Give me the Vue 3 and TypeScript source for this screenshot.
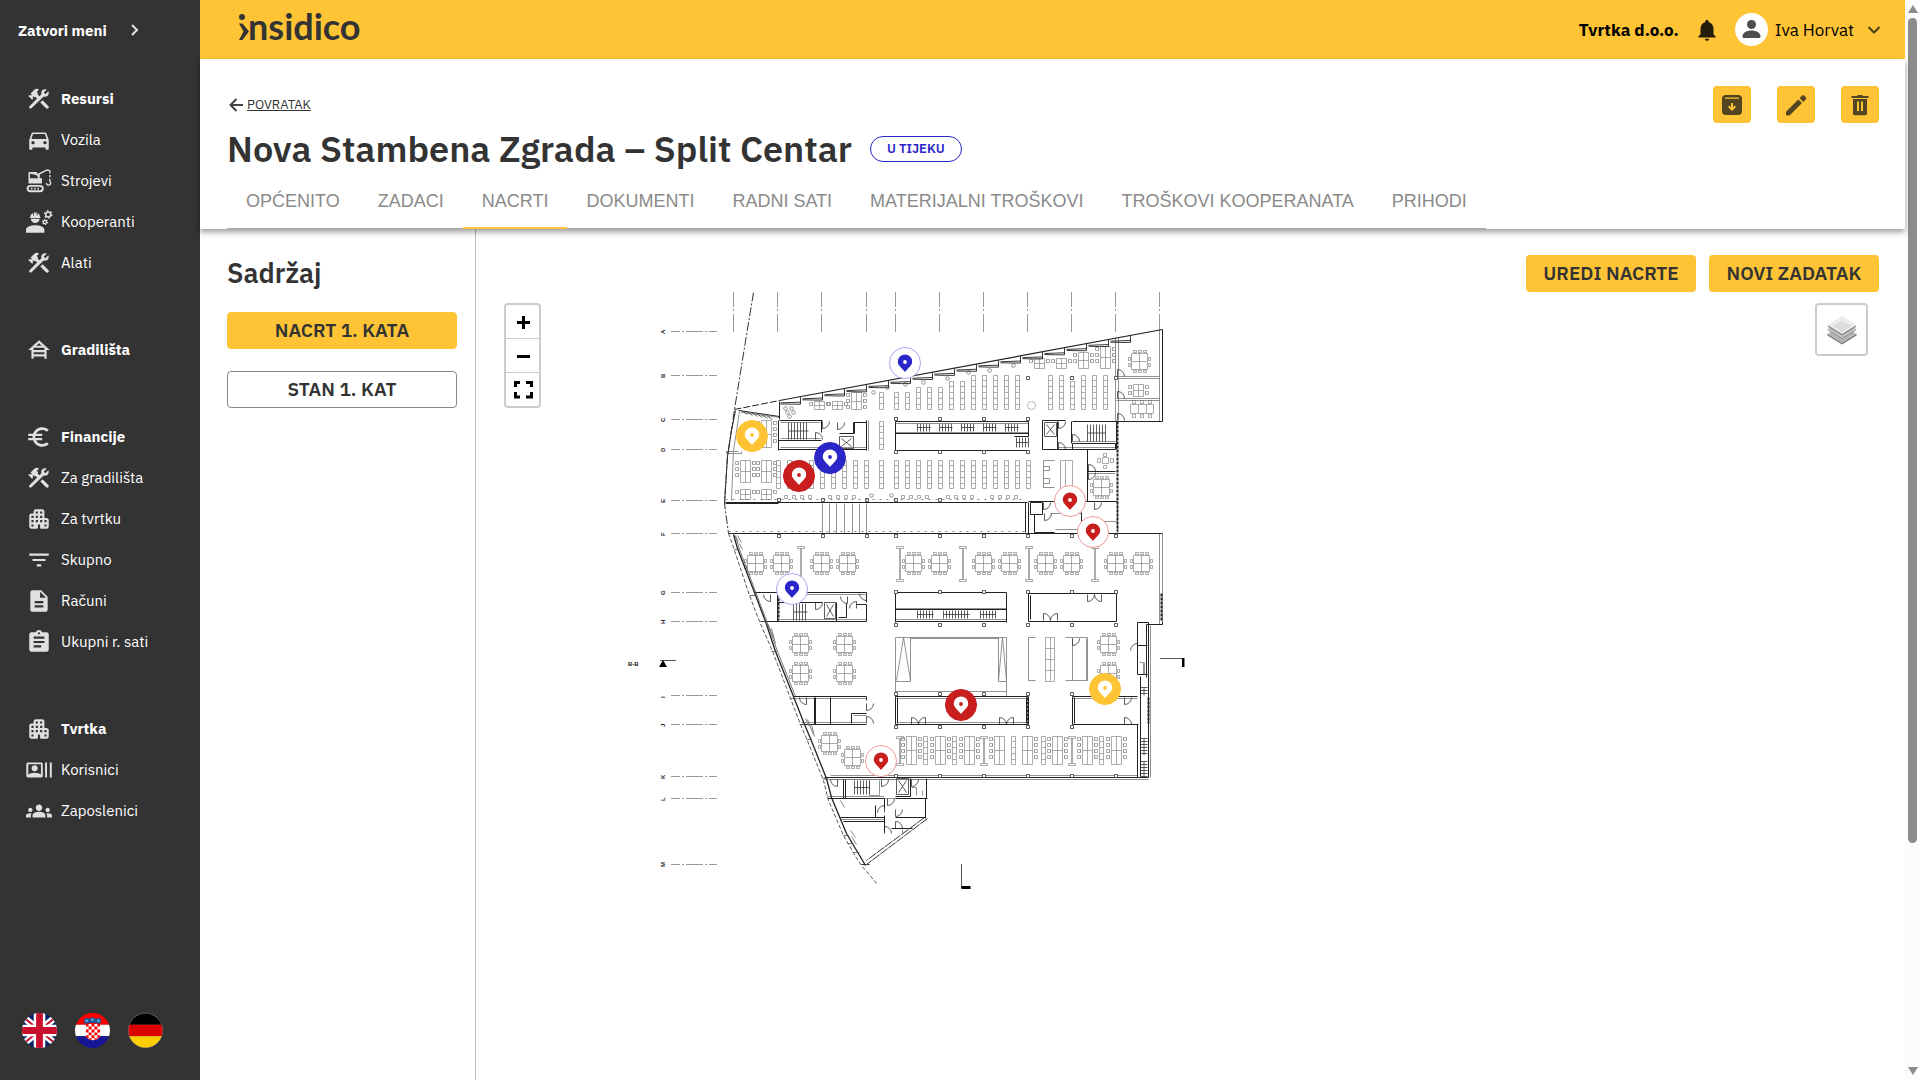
<script setup lang="ts">
import { ref } from 'vue'

interface NavItem {
  label: string
  icon: string
}

const icons: Record<string, string> = {
  tools:
    'M17.5 10c1.93 0 3.5-1.57 3.5-3.5 0-.58-.16-1.12-.41-1.6l-2.7 2.7-1.49-1.49 2.7-2.7C18.62 3.16 18.08 3 17.5 3 15.57 3 14 4.57 14 6.5c0 .41.08.8.21 1.16l-1.85 1.85-1.78-1.78.71-.71-1.41-1.41L12 3.49c-1.17-1.17-3.07-1.17-4.24 0L4.22 7.03l1.41 1.41H2.81l-.71.71 3.54 3.54.71-.71V9.15l1.41 1.41.71-.71 1.78 1.78-7 7c-.5.5-.5 1.3 0 1.8s1.3.5 1.8 0L16.34 9.79c.36.13.75.21 1.16.21zM13.2 15.3l2.1-2.1 5.3 5.3c.6.6.6 1.5 0 2.1s-1.5.6-2.1 0z',
  car: 'M18.92 6.01C18.72 5.42 18.16 5 17.5 5h-11c-.66 0-1.21.42-1.42 1.01L3 12v8c0 .55.45 1 1 1h1c.55 0 1-.45 1-1v-1h12v1c0 .55.45 1 1 1h1c.55 0 1-.45 1-1v-8l-2.08-5.99zM6.5 16c-.83 0-1.5-.67-1.5-1.5S5.67 13 6.5 13s1.5.67 1.5 1.5S7.33 16 6.5 16zm11 0c-.83 0-1.5-.67-1.5-1.5s.67-1.5 1.5-1.5 1.5.67 1.5 1.5-.67 1.5-1.5 1.5zM5 11l1.5-4.5h11L19 11H5z',
  house:
    'M19 12h3L12 3 2 12h3v8h2v-2h10v2h2v-8zM7.21 10h9.58l.21.19V12H7v-1.81l.21-.19zm7.36-2H9.43L12 5.69 14.57 8zM7 16v-2h10v2H7z',
  euro: 'M15 18.5c-2.51 0-4.68-1.42-5.76-3.5H15v-2H8.58c-.05-.33-.08-.66-.08-1s.03-.67.08-1H15V9H9.24C10.32 6.92 12.5 5.5 15 5.5c1.61 0 3.09.59 4.23 1.57L21 5.3C19.41 3.87 17.3 3 15 3c-3.92 0-7.24 2.51-8.48 6H2v2h4.06c-.04.33-.06.66-.06 1s.02.67.06 1H2v2h4.52c1.24 3.49 4.56 6 8.48 6 2.31 0 4.41-.87 6-2.3l-1.78-1.77c-1.13.98-2.6 1.57-4.22 1.57z',
  building:
    'M17 11V5c0-1.1-.9-2-2-2H9c-1.1 0-2 .9-2 2v2H5c-1.1 0-2 .9-2 2v10c0 1.1.9 2 2 2h5c.55 0 1-.45 1-1v-3h2v3c0 .55.45 1 1 1h5c1.1 0 2-.9 2-2v-6c0-1.1-.9-2-2-2h-2zM7 19H5v-2h2v2zm0-4H5v-2h2v2zm0-4H5V9h2v2zm4 4H9v-2h2v2zm0-4H9V9h2v2zm0-4H9V5h2v2zm4 8h-2v-2h2v2zm0-4h-2V9h2v2zm0-4h-2V5h2v2zm4 12h-2v-2h2v2zm0-4h-2v-2h2v2z',
  filter: 'M10 18h4v-2h-4v2zM3 6v2h18V6H3zm3 7h12v-2H6v2z',
  document:
    'M14 2H6c-1.1 0-1.99.9-1.99 2L4 20c0 1.1.89 2 1.99 2H18c1.1 0 2-.9 2-2V8l-6-6zm2 16H8v-2h8v2zm0-4H8v-2h8v2zm-3-5V3.5L18.5 9H13z',
  clipboard:
    'M19 3h-4.18C14.4 1.84 13.3 1 12 1c-1.3 0-2.4.84-2.82 2H5c-1.1 0-2 .9-2 2v14c0 1.1.9 2 2 2h14c1.1 0 2-.9 2-2V5c0-1.1-.9-2-2-2zm-7 0c.55 0 1 .45 1 1s-.45 1-1 1-1-.45-1-1 .45-1 1-1zm2 14H7v-2h7v2zm3-4H7v-2h10v2zm0-4H7V7h10v2z',
  users:
    'M17.6 5v14h1.8V5zm4.4 0v14h1.8V5zM14 5H2C1 5 .3 5.700.3 6.600v10.800C.3 18.300 1 19 2 19h12c.9 0 1.500-.7 1.500-1.600V6.600C15.500 5.700 14.900 5 14 5zM2.100 6.600h11.700v9.600c-1.300-1-3.800-1.700-5.900-1.700s-4.500.7-5.800 1.700zM8 7.600a2.800 2.800 0 1 0 0 5.600 2.800 2.800 0 0 0 0-5.600z',
  group:
    'M12 12.75c1.63 0 3.07.39 4.24.9 1.08.48 1.76 1.56 1.76 2.73V18H6v-1.61c0-1.18.68-2.26 1.76-2.73 1.17-.52 2.61-.91 4.24-.91zM4 13c1.1 0 2-.9 2-2s-.9-2-2-2-2 .9-2 2 .9 2 2 2zm1.13 1.1c-.37-.06-.74-.1-1.13-.1-.99 0-1.93.21-2.78.58C.48 14.9 0 15.62 0 16.43V18h4.5v-1.61c0-.83.23-1.61.63-2.29zM20 13c1.1 0 2-.9 2-2s-.9-2-2-2-2 .9-2 2 .9 2 2 2zm4 3.43c0-.81-.48-1.53-1.22-1.85-.85-.37-1.79-.58-2.78-.58-.39 0-.76.04-1.13.1.4.68.63 1.46.63 2.29V18H24v-1.57zM12 6c1.66 0 3 1.34 3 3s-1.34 3-3 3-3-1.34-3-3 1.34-3 3-3z',
}

const nav: { head: NavItem; items: NavItem[] }[] = [
  {
    head: { label: 'Resursi', icon: 'tools' },
    items: [
      { label: 'Vozila', icon: 'car' },
      { label: 'Strojevi', icon: 'crane' },
      { label: 'Kooperanti', icon: 'worker' },
      { label: 'Alati', icon: 'tools' },
    ],
  },
  { head: { label: 'Gradilišta', icon: 'house' }, items: [] },
  {
    head: { label: 'Financije', icon: 'euro' },
    items: [
      { label: 'Za gradilišta', icon: 'tools' },
      { label: 'Za tvrtku', icon: 'building' },
      { label: 'Skupno', icon: 'filter' },
      { label: 'Računi', icon: 'document' },
      { label: 'Ukupni r. sati', icon: 'clipboard' },
    ],
  },
  {
    head: { label: 'Tvrtka', icon: 'building' },
    items: [
      { label: 'Korisnici', icon: 'users' },
      { label: 'Zaposlenici', icon: 'group' },
    ],
  },
]

const tabs = [
  'OPĆENITO',
  'ZADACI',
  'NACRTI',
  'DOKUMENTI',
  'RADNI SATI',
  'MATERIJALNI TROŠKOVI',
  'TROŠKOVI KOOPERANATA',
  'PRIHODI',
]
const activeTab = ref('NACRTI')

const plans = ['NACRT 1. KATA', 'STAN 1. KAT']
const activePlan = ref('NACRT 1. KATA')

type Tone = 'blue' | 'red' | 'amber'
interface Pin {
  x: number
  y: number
  tone: Tone
  solid: boolean
}
const pins: Pin[] = [
  { x: 411, y: 71, tone: 'blue', solid: false },
  { x: 258, y: 144, tone: 'amber', solid: true },
  { x: 336, y: 166, tone: 'blue', solid: true },
  { x: 305, y: 184, tone: 'red', solid: true },
  { x: 576, y: 209, tone: 'red', solid: false },
  { x: 599, y: 240, tone: 'red', solid: false },
  { x: 298, y: 297, tone: 'blue', solid: false },
  { x: 611, y: 397, tone: 'amber', solid: true },
  { x: 467, y: 413, tone: 'red', solid: true },
  { x: 387, y: 469, tone: 'red', solid: false },
]

/* ---- floor plan geometry ---- */
const range = (from: number, to: number, step: number): number[] => {
  const out: number[] = []
  for (let v = from; v <= to; v += step) out.push(v)
  return out
}
const box = (x: number, y: number, w: number, h: number): string => `M${x} ${y}h${w}v${h}h${-w}z`

const axes = [733, 777, 821, 866, 895, 939, 983, 1027, 1071, 1115, 1159]
const rows: [string, number][] = [
  ['A', 331], ['B', 375], ['C', 419], ['D', 449], ['E', 500], ['F', 533], ['G', 592],
  ['H', 621], ['I', 695], ['J', 724], ['K', 776], ['L', 798], ['M', 864],
]

/* saw-tooth facade below the slanted roof edge */
const slant = (x: number): number => 409 - (x - 734) * 0.187
const teeth = range(800, 1150, 22)
  .map((x) => `M${x} ${slant(x)}v7h-9L${x - 20} ${slant(x - 20) + 3}M${x - 20} ${slant(x - 20) + 2}L${x} ${slant(x) + 5}`)
  .join('')

const shelf = (x: number, top: number, bottom: number): string => {
  let d = box(x - 2, top, 4, bottom - top)
  for (let y = top + 5; y < bottom - 2; y += 6) d += `M${x - 2} ${y}h4`
  return d
}
const shelves = [
  ...[881, 896, 907].map((x) => shelf(x, 392, 409)),
  ...[918, 929, 940].map((x) => shelf(x, 387, 409)),
  ...[951, 962].map((x) => shelf(x, 381, 409)),
  ...[973, 984, 995, 1006, 1017, 1050, 1061, 1083, 1094, 1105].map((x) => shelf(x, 375, 409)),
  shelf(1072, 381, 409),
  shelf(881, 421, 449),
  shelf(881, 460, 488),
  ...range(778, 866, 11).map((x) => shelf(x, 460, 488)),
  ...range(896, 1028, 11).map((x) => shelf(x, 460, 488)),
  ...[925, 954, 1013, 1043, 1101].map((x) => shelf(x, 736, 764)),
  box(1060, 460, 12, 28) + 'M1065 461v27',
  box(1045, 637, 9, 44) + 'M1050 637v44M1045 648h9M1045 659h9M1045 670h9',
].join('')

/* desk for ten: square top with chairs all round */
const table = (x: number, y: number): string =>
  box(x - 8, y - 8, 16, 16) +
  `M${x} ${y - 8}v16M${x - 8} ${y}h16` +
  [-5, 0, 5].map((o) => box(x + o - 1, y - 11, 3, 2) + box(x + o - 1, y + 9, 3, 2)).join('') +
  [-4, 2].map((o) => box(x - 11, y + o, 2, 3) + box(x + 9, y + o, 2, 3)).join('')
const tables = [
  ...[755, 781, 821, 847, 913, 939, 983, 1009, 1045, 1071, 1115, 1141].map((x) => table(x, 563)),
  table(800, 644), table(844, 644), table(800, 673), table(844, 673),
  table(1108, 644), table(1108, 673), table(829, 743), table(852, 757),
  table(1139, 361), table(1101, 487),
].join('')

/* long desk with chairs on the chosen sides */
const desk = (x: number, y: number, h: number, left = true, right = true): string => {
  let d = box(x - 5, y, 10, h) + `M${x} ${y}v${h}M${x - 5} ${y + Math.round(h / 2)}h10`
  for (let o = 1; o < h - 3; o += 6) {
    if (left) d += box(x - 10, y + o, 3, 3) + `M${x - 7} ${y + o}v3`
    if (right) d += box(x + 7, y + o, 3, 3) + `M${x + 7} ${y + o}v3`
  }
  return d
}
const desks = [
  desk(911, 736, 28), desk(940, 736, 28), desk(969, 736, 28), desk(999, 736, 28, true, false),
  desk(1027, 736, 28, false, true), desk(1057, 736, 28), desk(1087, 736, 28), desk(1116, 736, 28),
  desk(745, 460, 22), desk(766, 460, 22), desk(745, 489, 10), desk(766, 489, 10),
  desk(766, 420, 27), desk(819, 401, 8), desk(837, 401, 8), desk(856, 392, 17),
  desk(1039, 358, 10), desk(1061, 358, 10), desk(1083, 352, 16), desk(1105, 346, 22),
  desk(1138, 384, 12), box(1130, 404, 23, 9) + 'M1138 404v9M1146 404v9',
  ...[1132, 1140, 1148].map((x) => box(x, 400, 3, 3) + box(x, 414, 3, 3)),
  box(1102, 457, 6, 6), box(1097, 458, 3, 4), box(1110, 458, 3, 4), box(1103, 453, 3, 3), box(1103, 465, 3, 3),
].join('')

const stools = [785, 829, 902, 947, 991]
  .flatMap((x) => range(x, x + 30, 8))
  .map((x) => box(x - 1, 495, 3, 3))
  .join('')
const rounds = [
  [873, 392], [887, 387], [905, 384], [923, 382], [947, 378], [968, 372], [989, 370], [1013, 365],
  [871, 495], [891, 495], [785, 408], [791, 408], [787, 412], [793, 412], [789, 416],
]

/* structural columns on the grid */
const cols = [
  ...[895, 939, 983, 1027].flatMap((x) => [[x, 418], [x, 451]]),
  ...[1027, 1071, 1115].map((x) => [x, 377]),
  ...[778, 822, 866, 895, 939].map((x) => [x, 499]),
  ...[778, 822, 866, 895, 939, 983, 1027, 1071, 1115].map((x) => [x, 535]),
  ...[895, 939, 983, 1027, 1071, 1115].flatMap((x) => [[x, 591], [x, 624]]),
  ...[895, 939, 983, 1027, 1071].flatMap((x) => [[x, 693], [x, 726], [x, 775]]),
  [1115, 775],
]
  .map(([x, y]) => box(x - 1, y - 1, 3, 3))
  .join('')

const stair = (x: number, y: number, w: number, h: number): string => {
  let d = `M${x} ${y + h / 2}h${w}`
  for (let o = 0; o <= w; o += 3) d += `M${x + o} ${y}v${h}`
  return d
}
const ladder = (x: number, y: number, w: number, h: number): string => {
  let d = `M${x + w / 2} ${y}v${h}`
  for (let o = 0; o <= h; o += 3) d += `M${x} ${y + o}h${w}`
  return d
}
const stairs = [
  stair(788, 422, 20, 17),
  ...[917, 939, 961, 983, 1005].map((x) => stair(x, 423, 13, 8)),
  stair(1016, 437, 12, 10), stair(1087, 424, 18, 17), stair(793, 603, 14, 17),
  stair(917, 610, 16, 8), stair(943, 610, 26, 8), stair(980, 610, 15, 8), stair(854, 780, 15, 14),
  ladder(1140, 687, 7, 8), ladder(1140, 738, 7, 17), ladder(1140, 761, 7, 16),
].join('')

const lift = (x: number, y: number, w: number, h: number): string =>
  box(x, y, w, h) + `M${x + 2} ${y + 2}l${w - 4} ${h - 4}M${x + w - 2} ${y + 2}l${4 - w} ${h - 4}`
const lifts = lift(839, 436, 14, 12) + lift(1044, 422, 12, 14) + lift(824, 602, 11, 16) + lift(896, 778, 12, 16)

const screens = [
  ...[800, 899, 962, 1028, 1094].map((x) => [x, 546, 35]),
  ...[899, 983, 1071].map((x) => [x, 736, 29]),
]
  .map(([x, y, h]) => `${box(x - 3, y, 7, 2)}M${x} ${y + 2}v${h - 4}M${x + 1} ${y + 2}v${h - 4}${box(x - 3, y + h - 2, 7, 2)}`)
  .join('')

const door = (x: number, y: number, sx: number, sy: number): string =>
  `M${x} ${y}v${7 * sy}a7 7 0 0 ${sx * sy > 0 ? 0 : 1} ${7 * sx} ${-7 * sy}`
const doors = [
  door(822, 421, 1, 1), door(837, 422, 1, 1), door(815, 439, 1, -1), door(1058, 421, 1, 1), door(1058, 449, 1, -1),
  door(1072, 441, 1, -1), door(1117, 376, 1, -1), door(1117, 398, 1, -1), door(1117, 420, 1, -1),
  door(1088, 471, 1, -1), door(1088, 472, 1, 1), door(1043, 502, 1, 1), door(1094, 502, 1, 1), door(1044, 513, 1, 1),
  door(1087, 594, 1, 1), door(1101, 594, -1, 1), door(1043, 620, 1, -1), door(1057, 620, -1, -1),
  door(911, 724, 1, -1), door(925, 724, -1, -1), door(999, 724, 1, -1), door(1013, 724, -1, -1),
  door(1124, 697, 1, 1), door(1124, 724, 1, -1), door(866, 703, 1, 1), door(866, 723, 1, -1),
  door(770, 594, -1, 1), door(806, 697, -1, 1), door(847, 596, -1, 1), door(866, 593, -1, 1),
  door(815, 602, 1, 1), door(856, 608, -1, -1), door(837, 779, -1, 1), door(881, 779, 1, 1), door(911, 779, 1, 1),
  door(887, 798, 1, 1), door(895, 809, 1, 1), door(884, 812, -1, -1), door(895, 828, 1, -1), door(884, 833, 1, -1),
  door(1137, 650, -1, -1), door(1072, 638, 1, 1), door(785, 596, -1, -1),
].join('')

const heavy = [
  'M735 410L731 430L727 456L724 503M725 503H778M725 502H1027M728 533H1162M779 401v18M738 410l41 6',
  'M779 420h43M778 420v30M778 449h88M866 420v30M821 420v12M778 440h43M854 422v11h-15M853 433v-11h13',
  'M895 421h133M895 433h133M895 421v29M895 450h133M1028 421v15h-14',
  'M1042 420v29h15M1057 421v28M1071 421v22M1042 420h23M1072 421h45M1072 443h43v6M1072 443v6',
  'M1116 420v29M1116 421h46M1162 329v92M1087 449v52M1087 471h28M1057 449h58',
  'M1025 502v30M1028 502v31M1028 501h89M1030 502h12v12h-12zM1034 514v18h20M1081 512v20M1028 533h89',
  'M754 592h112M777 593v28M760 621h106M866 592v10M778 602h44M836 602v19M846 603v14h-8M856 604h10M866 604v17',
  'M895 592h111M895 592v30M1006 592v30M895 609h111M895 621h111',
  'M1028 593h88v28h-88zM1030 595v24',
  'M793 696h73v4M800 724h66M814 697v27M815 697v27M830 697v27M866 713h-15v10',
  'M895 696h133v28h-133zM897 697v26M1026 697v26M1072 696h65M1072 696v28M1074 697v26M1072 724h66M1137 724v53',
  'M824 777h103M927 777H1148M1148 622v155M1137 622v52M1146 624v53M1137 622h11M1146 624h16v-3M1137 645h10M1137 674h10M1140 676v100',
  'M843 779v19M845 779v19M827 798h57M884 798v10M884 815v17M875 805v12M840 817h44M843 821h41M895 798h32M926 778v20M925 798v20M895 817h30M891 828h21M910 778v18M895 796h15',
].join('')
const fine = [
  'M739 411L733 450L731 500M741 412l38 5M738 451h-12v2h15v-2M780 422h40M780 447h86M868 420v30M780 438h40',
  'M895 423h133M895 432h133M1115 337v83M1118 337v83M1159 331v90M1116 376h43M1116 378h43M1116 398h43M1116 400h43M1057 447h58M1072 441h43',
  'M1043 460h11M1043 460v27h11M1043 466h6v4h-6M1043 478h6v5h-6M1088 473h27M1159 533v91M1162 533v91',
  'M1050 513h31M1082 521h34M1055 529h26M1117 502v31M895 608h111M895 619h111M779 594h86M780 619h86',
  'M895 637h111M910 638h88M895 637v59M1006 637v59M910 637v44h-15M896 680l7-43 7 43M998 637v44h8M998 680l4-43 4 43M895 691h111',
  'M1035 637h-7v43h7M1028 637M1065 637h22v43h-22M1072 638v42M1086 638v42',
  'M896 698h131M896 722h131M1072 698h65M793 698h73M801 722h65M853 715h13M830 775h307M830 779h318',
  'M829 533v-30M836 533v-30M844 533v-30M852 533v-30M859 533v-30M822 533v-30M866 533v-30M1150 625v152M1144 662v12M1139 662h4v12',
  'M824 779h103M827 796h57M840 819h44M869 780v15h10v-15M883 798h12M911 787h5v8M922 795v-5M902 829v4',
].join('')
</script>

<template>
  <div class="app">
    <aside class="sidebar">
      <button class="collapse" type="button">
        Zatvori meni
        <svg width="12" height="16" viewBox="0 0 12 16"><path d="M3 3l5 5-5 5" fill="none" stroke="#e4e4e4" stroke-width="2" /></svg>
      </button>
      <nav class="nav">
        <ul v-for="group in nav" :key="group.head.label" class="group">
          <li v-for="(item, i) in [group.head, ...group.items]" :key="item.label">
            <a href="#" class="nav-link" :class="{ strong: i === 0 }">
              <svg v-if="item.icon === 'crane'" class="nav-icon" viewBox="0 0 24 24" fill="none" stroke="#e0e0e0">
                <path d="M3 10.500V4.500h6.500l2.500 4.500V5.500L19 2h2.500M12 6.500L3.800 4.500M14 9.500v4H3v-3" stroke-width="1.400" />
                <path d="M3 9.500h11v4H3z" fill="#e0e0e0" stroke="none" />
                <path d="M22 2v3M22 6.500v2M22 10v2.200a2 2 0 1 1-3.200 1.800" stroke-width="1.300" />
                <rect x="1.500" y="16.500" width="14" height="5" rx="2.500" stroke-width="1.800" />
                <path d="M4.500 19h9" stroke-width="1.500" stroke-dasharray="1.500 1.500" />
              </svg>
              <svg v-else-if="item.icon === 'worker'" class="nav-icon" viewBox="0 0 24 24" fill="#e0e0e0">
                <path d="M0 22v-3c0-2.700 5-4 8.500-4s8.500 1.300 8.500 4v3zM4.500 9h8a4 4 0 0 1-8 0zM3.500 8.300V7.500H4C4 5.600 5 4.200 6.500 3.600V6h.8V3.200h2.500V6h.8V3.600C12 4.200 13 5.600 13 7.500h.5v.8z" />
                <circle cx="20.500" cy="5" r="2.300" fill="none" stroke="#e0e0e0" stroke-width="1.400" />
                <circle cx="20.500" cy="5" r="3.400" fill="none" stroke="#e0e0e0" stroke-width="1.200" stroke-dasharray="1.600 1.960" />
                <circle cx="17.500" cy="12" r="1.500" fill="none" stroke="#e0e0e0" stroke-width="1.200" />
                <circle cx="17.500" cy="12" r="2.300" fill="none" stroke="#e0e0e0" stroke-width="1" stroke-dasharray="1.200 1.210" />
              </svg>
              <svg v-else class="nav-icon" viewBox="0 0 24 24" fill="#e0e0e0">
                <path :d="icons[item.icon]" :fill-rule="item.icon === 'users' ? 'evenodd' : 'nonzero'" />
              </svg>
              {{ item.label }}
            </a>
          </li>
        </ul>
      </nav>
      <div class="flags">
        <button type="button" aria-label="English">
          <svg viewBox="0 0 36 36">
            <clipPath id="uk"><circle cx="18" cy="18" r="18" /></clipPath>
            <g clip-path="url(#uk)">
              <path fill="#012169" d="M0 0h36v36H0z" />
              <path d="M0 3l36 30M36 3L0 33" stroke="#fff" stroke-width="7" />
              <path d="M0 3l36 30M36 3L0 33" stroke="#c8102e" stroke-width="2" />
              <path d="M18 0v36M0 18h36" stroke="#fff" stroke-width="12" />
              <path d="M18 0v36M0 18h36" stroke="#c8102e" stroke-width="7" />
            </g>
          </svg>
        </button>
        <button type="button" aria-label="Hrvatski">
          <svg viewBox="0 0 36 36">
            <clipPath id="hr"><circle cx="18" cy="18" r="18" /></clipPath>
            <clipPath id="shield"><path d="M11 11h15v11a7.500 6 0 0 1-15 0z" /></clipPath>
            <g clip-path="url(#hr)">
              <path fill="#f00" d="M0 0h36v12H0z" />
              <path fill="#fff" d="M0 12h36v12H0z" />
              <path fill="#171796" d="M0 24h36v12H0z" />
              <g clip-path="url(#shield)">
                <path fill="#fff" d="M11 11h15v18H11z" />
                <path d="M11 12.500h15M11 18.500h15M11 24.500h15" stroke="#f00" stroke-width="3" stroke-dasharray="3 3" />
                <path d="M14 15.500h15M14 21.500h15M14 27.500h15" stroke="#f00" stroke-width="3" stroke-dasharray="3 3" />
              </g>
              <path d="M10 11L9 7l3-2 3 1 3-2 3 2 4-1 2 2-1 4-8-1z" fill="#1b5a9a" />
              <path d="M11 8h2M17 7h2M23 8h2" stroke="#7fc0f0" stroke-width="2" />
            </g>
          </svg>
        </button>
        <button type="button" aria-label="Deutsch">
          <svg viewBox="0 0 36 36">
            <clipPath id="de"><circle cx="18" cy="18" r="17.500" /></clipPath>
            <circle cx="18" cy="18" r="18" fill="#777" />
            <g clip-path="url(#de)">
              <path d="M0 0h36v12H0z" />
              <path fill="#d00" d="M0 12h36v12H0z" />
              <path fill="#ffce00" d="M0 24h36v12H0z" />
            </g>
          </svg>
        </button>
      </div>
    </aside>

    <div class="page">
      <header class="topbar">
        <a href="#" class="logo" aria-label="insidico">
          <svg width="140" height="56" viewBox="0 0 140 56">
            <circle cx="4" cy="15" r="3" fill="#333" />
            <path d="M1 21.500h3.500l6.500 8-6.500 8.500H1L5.500 29.500z" fill="#333" />
            <text x="10" y="38" class="logo-text">nsidico</text>
          </svg>
        </a>
        <div class="account">
          <span class="company">Tvrtka d.o.o.</span>
          <button type="button" class="bell" aria-label="Obavijesti">
            <svg width="26" height="26" viewBox="0 0 24 24"><path fill="#241c08" d="M12 22c1.100 0 2-.9 2-2h-4c0 1.100.89 2 2 2zm6-6v-5c0-3.070-1.640-5.640-4.500-6.320V4c0-.83-.67-1.500-1.500-1.500s-1.500.67-1.500 1.500v.68C7.630 5.360 6 7.920 6 11v5l-2 2v1h16v-1l-2-2z" /></svg>
          </button>
          <button type="button" class="user">
            <svg width="33" height="33" viewBox="0 0 33 33">
              <circle cx="16.500" cy="16.500" r="16.500" fill="#fff" />
              <circle cx="16.500" cy="11.500" r="4.500" fill="#4d4d4d" />
              <path d="M7.500 23.500c0-4 4.500-6 9-6s9 2 9 6c0 1-.7 1.500-1.500 1.500H9c-.8 0-1.500-.5-1.500-1.500z" fill="#4d4d4d" />
            </svg>
            <span>Iva Horvat</span>
            <svg class="caret" width="14" height="14" viewBox="0 0 14 14"><path d="M1.500 4L7 9.500 12.500 4" fill="none" stroke="#4a3c17" stroke-width="2" /></svg>
          </button>
        </div>
      </header>

      <section class="project">
        <div class="project-top">
          <a href="#" class="back">
            <svg width="18" height="16" viewBox="0 0 18 16"><path d="M16 8H4M9.500 2L3.500 8l6 6" fill="none" stroke="#444" stroke-width="2" /></svg>
            <span>POVRATAK</span>
          </a>
          <div class="actions">
            <button type="button" aria-label="Arhiviraj">
              <svg viewBox="0 0 24 24"><path fill-rule="evenodd" d="M5.500 2h13C20.500 2 22 3.500 22 5.500v13c0 2-1.500 3.500-3.500 3.500h-13C3.500 22 2 20.500 2 18.500v-13C2 3.500 3.500 2 5.500 2zM5 4.500v1.200h14V4.500zM11 10v4.200l-1.600-1.600L8 14l4 4 4-4-1.400-1.400-1.600 1.600V10z" /></svg>
            </button>
            <button type="button" aria-label="Uredi">
              <svg viewBox="0 0 24 24"><path d="M2 19.500c0-.5.100-.9.500-1.300L14.300 6.400l3.700 3.700L6.100 21.900c-.3.300-.7.500-1.200.5H3c-.6 0-1-.4-1-1zM15.600 5.100l2.300-2.400c.8-.8 1.700-.8 2.400 0l1.400 1.400c.8.800.8 1.700 0 2.400l-2.400 2.400z" /></svg>
            </button>
            <button type="button" aria-label="Izbriši">
              <svg viewBox="0 0 24 24"><path fill-rule="evenodd" d="M4 3h5l1-1h4l1 1h5.500v2H3.500V3zM5 6h14v14.500c0 1-.7 1.700-1.700 1.700H6.700c-1 0-1.700-.7-1.700-1.700zM9 8.500V18h2V8.500zm4 0V18h2V8.500z" /></svg>
            </button>
          </div>
        </div>
        <div class="title-row">
          <h1>Nova Stambena Zgrada – Split Centar</h1>
          <span class="status">U TIJEKU</span>
        </div>
        <div class="tabs" role="tablist">
          <button
            v-for="tab in tabs"
            :key="tab"
            type="button"
            role="tab"
            :aria-selected="tab === activeTab"
            :class="{ active: tab === activeTab }"
            @click="activeTab = tab"
          >
            {{ tab }}
          </button>
        </div>
      </section>

      <main class="body">
        <section class="contents">
          <h2>Sadržaj</h2>
          <button
            v-for="plan in plans"
            :key="plan"
            type="button"
            class="plan-button"
            :class="{ active: plan === activePlan }"
            @click="activePlan = plan"
          >
            {{ plan }}
          </button>
        </section>

        <section class="viewer">
          <div class="viewer-actions">
            <button type="button">UREDI NACRTE</button>
            <button type="button">NOVI ZADATAK</button>
          </div>
          <div class="map">
            <svg class="plan" width="720" height="600" viewBox="494 292 720 600" fill="none" stroke="#222" stroke-width="1">
              <g stroke="#999" stroke-dasharray="15 2 2 3 18">
                <path v-for="x in axes" :key="x" :d="`M${x + 0.5} 292v40`" />
              </g>
              <g stroke="#999" stroke-dasharray="9 2 2 2 17 2 2 2">
                <path v-for="row in rows" :key="row[0]" :d="`M671 ${row[1] + 0.5}h46`" />
              </g>
              <g class="axis-label" fill="#222" stroke="none">
                <text v-for="row in rows" :key="row[0]" :transform="`translate(665 ${row[1] + 3}) rotate(-90)`">{{ row[0] }}</text>
                <text x="628" y="666">B-B</text>
              </g>
              <path d="M660 660.500h16M1160 658.500h24M961.500 864v24" stroke="#555" />
              <path d="M659 667l4-7 4 7zM1182 658h2.500v9H1182zM961.500 886h9v3h-9z" fill="#000" stroke="none" />
              <g transform="translate(.5 .5)">
                <path :d="shelves" stroke="#aaa" />
                <path :d="tables + desks + stools" stroke="#888" stroke-width=".7" />
                <circle v-for="(r, i) in rounds" :key="i" :cx="r[0]" :cy="r[1]" r="1.800" stroke="#777" stroke-width=".8" />
                <circle cx="1031" cy="405" r="4" stroke="#999" stroke-width=".7" />
                <path :d="screens" stroke="#888" stroke-width=".7" />
                <path :d="fine" stroke="#777" stroke-width=".8" />
                <path :d="stairs" stroke="#333" stroke-width=".8" />
                <path :d="lifts" stroke="#333" stroke-width=".8" />
                <path :d="doors" stroke="#333" stroke-width=".8" />
                <path :d="heavy" />
                <path :d="cols" fill="#fff" stroke="#333" stroke-width=".8" />
                <path d="M734 409L779 400" stroke-dasharray="7 2" />
                <path d="M779 400L1162 329" stroke-width="1.200" />
                <path :d="teeth" stroke-width=".9" />
                <path d="M741 410l6 4m-1-3l6 4m-1-3l6 4m-1-3l6 4m-1-3l6 4m-1-3l6 4" stroke="#444" stroke-width=".8" />
                <path d="M753 292L744 347 734 409 727 455 724 503 728 533" stroke="#333" stroke-dasharray="9 2 2 2" />
                <path d="M728 533l6 17 15 45 10 26 14 32 17 45 10 26 6 14 17 42 5 20 15 35 12 21 6 9 16 19" stroke="#444" stroke-width=".9" stroke-dasharray="4 2" />
                <path d="M733 534l4 14 17 44 11 29 10 30 18 45 11 28 6 14 16 40 5 19 15 36 19 32" stroke-width="1.300" />
                <path d="M735 535l4 14 16 42 12 32 10 28 18 45M734 549h5M749 595h6M760 621h5M771 651h6M790 698h5M799 724h5M806 739h5M822 778h5M843 835h5M847 843h5M853 852h6" stroke="#555" stroke-width=".8" />
                <path d="M734 535l4 6m-1-6l4 7m-2 1l3 6m23 73l5 7m-3-6l6 14m-2-9l4 15m30 75l4 8m-2-7l6 15m-2-10l3 12m26 64l4 7m6 23l5 7m-4-1l5 8" stroke="#666" stroke-width=".8" />
                <path d="M927 818L866 864M924 817L866 860M861 864h8" stroke="#333" stroke-dasharray="9 1" />
                <path d="M1117 421v110M1161 593v28M1148 697v26M778 594v26M1027 697v26" stroke-width="2" stroke-dasharray="3 1" />
                <path d="M728 531h298M725 499h300" stroke="#666" stroke-width=".8" stroke-dasharray="2 5" />
              </g>
            </svg>

            <button
              v-for="(pin, i) in pins"
              :key="i"
              type="button"
              class="pin"
              :class="[pin.tone, { solid: pin.solid }]"
              :style="{ left: pin.x + 'px', top: pin.y + 'px' }"
              :aria-label="`Zadatak ${i + 1}`"
            >
              <svg width="20" height="20" viewBox="-10 -10 20 20">
                <path class="drop" d="M0 9C-2.500 5.500-7.200 2.500-7.200-1.300a7.200 7.200 0 0 1 14.400 0C7.200 2.500 2.500 5.500 0 9Z" />
                <circle class="dot" cx="0" cy="-1" r="1.900" />
              </svg>
            </button>

            <div class="zoom">
              <button type="button" aria-label="Povećaj"><svg width="33" height="33" viewBox="0 0 33 33"><path d="M11 17.500h13M17.500 11v13" stroke="#000" stroke-width="3" /></svg></button>
              <button type="button" aria-label="Smanji"><svg width="33" height="33" viewBox="0 0 33 33"><path d="M11 17.500h13" stroke="#000" stroke-width="3" /></svg></button>
              <button type="button" aria-label="Cijeli zaslon"><svg width="33" height="33" viewBox="0 0 33 33"><path d="M9.500 14V9.500H14M20 9.500h5.500V14M25.500 19v5H20M14 24H9.500v-5" fill="none" stroke="#000" stroke-width="3" /></svg></button>
            </div>
            <button type="button" class="layers" aria-label="Slojevi">
              <svg width="32" height="32" viewBox="0 0 32 32">
                <path d="M1.500 19.500L16 28.500l14.500-9v2L16 30.500l-14.500-9z" fill="#777" />
                <path d="M1.500 20L16 11l14.500 9L16 29z" fill="#b4b4b4" />
                <path d="M1.500 16L16 7l14.500 9L16 25z" fill="#8c8c8c" />
                <path d="M1.500 15L16 6l14.500 9L16 24z" fill="#c6c6c6" />
                <path d="M1.500 12.500L16 3.500l14.500 9L16 21.500z" fill="#858585" />
                <path d="M1.500 11L16 2l14.500 9L16 20z" fill="#ececec" />
                <path d="M7 12l9-5.500 9 5.500-9 6z" fill="#dcdcdc" />
              </svg>
            </button>
          </div>
        </section>
      </main>
    </div>

    <div class="scrollbar" aria-hidden="true">
      <span class="arrow up"></span>
      <span class="track"><span class="thumb"></span></span>
      <span class="arrow down"></span>
    </div>
  </div>
</template>

<style>
body {
  margin: 0;
  background: #fff;
}
</style>

<style scoped>
.app {
  display: flex;
  min-height: 100vh;
  font-family: "IBM Plex Sans", "Noto Sans", "Open Sans", sans-serif;
  color: #333;
}
.app * {
  box-sizing: border-box;
}
button {
  padding: 0;
  border: 0;
  background: none;
  font: inherit;
  color: inherit;
  cursor: pointer;
}
a {
  color: inherit;
  text-decoration: none;
}
svg {
  display: block;
  flex: none;
}

/* side menu */
.sidebar {
  flex: none;
  display: flex;
  flex-direction: column;
  width: 200px;
  background: #333;
  color: #fff;
  font-size: 15px;
}
.collapse {
  display: flex;
  align-items: center;
  gap: 22px;
  height: 60px;
  padding-left: 18px;
  font-weight: 700;
}
.nav {
  display: flex;
  flex-direction: column;
  gap: 46px;
  padding-top: 18px;
}
.group {
  margin: 0;
  padding: 0;
  list-style: none;
}
.nav-link {
  display: flex;
  align-items: center;
  gap: 9px;
  height: 41px;
  padding-left: 26px;
}
.nav-link.strong {
  font-weight: 700;
}
.nav-icon {
  width: 26px;
  height: 26px;
  overflow: visible;
}
.flags {
  display: flex;
  gap: 18px;
  margin-top: auto;
  padding: 24px 22px 32px;
}
.flags svg {
  width: 35px;
  height: 35px;
}

/* page */
.page {
  flex: 1;
  display: flex;
  flex-direction: column;
  min-width: 0;
}
.topbar {
  display: flex;
  align-items: center;
  justify-content: space-between;
  height: 59px;
  padding: 0 24px 0 38px;
  background: #ffc435;
  color: #000;
}
.logo-text {
  font-family: Lato, sans-serif;
  font-weight: 700;
  font-size: 36px;
  fill: #333;
}
.account {
  display: flex;
  align-items: center;
  font-size: 17px;
}
.company {
  font-weight: 700;
}
.bell {
  margin: 0 15px;
}
.user {
  display: flex;
  align-items: center;
  gap: 7px;
}
.caret {
  margin-left: 6px;
}

.project {
  position: relative;
  z-index: 1;
  padding: 27px 26px 0 27px;
  background: #fff;
  box-shadow: 0 3px 6px rgba(0, 0, 0, 0.4);
}
.project-top {
  display: flex;
  align-items: center;
  justify-content: space-between;
}
.back {
  display: flex;
  align-items: center;
  gap: 2px;
  font-size: 13px;
}
.back span {
  text-decoration: underline;
}
.actions {
  display: flex;
  gap: 26px;
}
.actions button {
  display: grid;
  place-items: center;
  width: 38px;
  height: 37px;
  border-radius: 4px;
  background: #ffc435;
}
.actions svg {
  width: 24px;
  height: 24px;
  fill: #514522;
}
.title-row {
  display: flex;
  align-items: center;
  gap: 18px;
  height: 52px;
}
h1 {
  margin: 0;
  font-size: 36px;
  font-weight: 600;
  line-height: 48px;
}
.status {
  padding: 0 16px;
  border: 1px solid #2b26c7;
  border-radius: 13px;
  color: #2b26c7;
  font-size: 13px;
  font-weight: 600;
  line-height: 24px;
}
.tabs {
  display: flex;
  width: fit-content;
  height: 54px;
  border-bottom: 1px solid #aaa;
}
.tabs button {
  height: 54px;
  padding: 0 19px;
  border-bottom: 2px solid transparent;
  color: #8a8a8a;
  font-family: "Liberation Sans", Arial, sans-serif;
  font-size: 18px;
}
.tabs button.active {
  border-color: #ffc435;
}

.body {
  flex: 1;
  display: flex;
}
.contents {
  flex: none;
  display: flex;
  flex-direction: column;
  gap: 22px;
  width: 276px;
  padding: 26px 18px 0 27px;
  border-right: 1px solid #bbb;
}
h2 {
  margin: 0;
  font-size: 27px;
  font-weight: 600;
  line-height: 35px;
}
.plan-button,
.viewer-actions button {
  height: 37px;
  padding-bottom: 1px;
  border-radius: 4px;
  font-size: 19px;
  font-weight: 600;
  line-height: 24px;
}
.plan-button {
  border: 1px solid #888;
}
.plan-button.active,
.viewer-actions button {
  border-color: #ffc435;
  background: #ffc435;
}
.viewer {
  flex: 1;
  display: flex;
  flex-direction: column;
  min-width: 0;
  padding: 26px 26px 0 18px;
}
.viewer-actions {
  display: flex;
  justify-content: flex-end;
  gap: 13px;
}
.viewer-actions button {
  width: 170px;
}
.map {
  position: relative;
  flex: 1;
  min-height: 620px;
  overflow: hidden;
}
.axis-label {
  font-family: "Liberation Sans", Arial, sans-serif;
  font-size: 6px;
  font-weight: 700;
}
.pin {
  position: absolute;
  display: grid;
  place-items: center;
  width: 32px;
  height: 32px;
  margin: -16px 0 0 -16px;
  border: 1px solid var(--soft);
  border-radius: 50%;
  background: #fff;
}
.pin.blue {
  --tone: #2b26c7;
  --soft: #a9a8f5;
}
.pin.red {
  --tone: #c81e1e;
  --soft: #f09a9a;
}
.pin.amber {
  --tone: #ffc435;
  --soft: #ffe09a;
}
.pin .drop {
  fill: var(--tone);
}
.pin .dot {
  fill: #fff;
}
.pin.solid {
  border-color: var(--tone);
  background: var(--tone);
}
.pin.solid .drop {
  fill: #fff;
}
.pin.solid .dot {
  fill: var(--tone);
}
.zoom {
  position: absolute;
  top: 11px;
  left: 10px;
  display: flex;
  flex-direction: column;
  border: 2px solid #ccc;
  border-radius: 4px;
  background: #fff;
}
.zoom button + button {
  border-top: 1px solid #ccc;
}
.layers {
  position: absolute;
  top: 11px;
  right: 11px;
  display: grid;
  place-items: center;
  width: 53px;
  height: 53px;
  border: 2px solid #ccc;
  border-radius: 4px;
  background: #fff;
}

/* scroll bar */
.scrollbar {
  position: sticky;
  top: 0;
  flex: none;
  display: flex;
  flex-direction: column;
  align-items: center;
  gap: 5px;
  width: 15px;
  height: 100vh;
  padding: 5px 0;
  background: #fcfcfc;
}
.arrow {
  border: 5px solid transparent;
}
.arrow.up {
  border-top: 0;
  border-bottom: 8px solid #8b8b8b;
}
.arrow.down {
  border-bottom: 0;
  border-top: 8px solid #8b8b8b;
}
.track {
  flex: 1;
  width: 9px;
}
.thumb {
  display: block;
  height: 79%;
  border-radius: 5px;
  background: #8b8b8b;
}
</style>
